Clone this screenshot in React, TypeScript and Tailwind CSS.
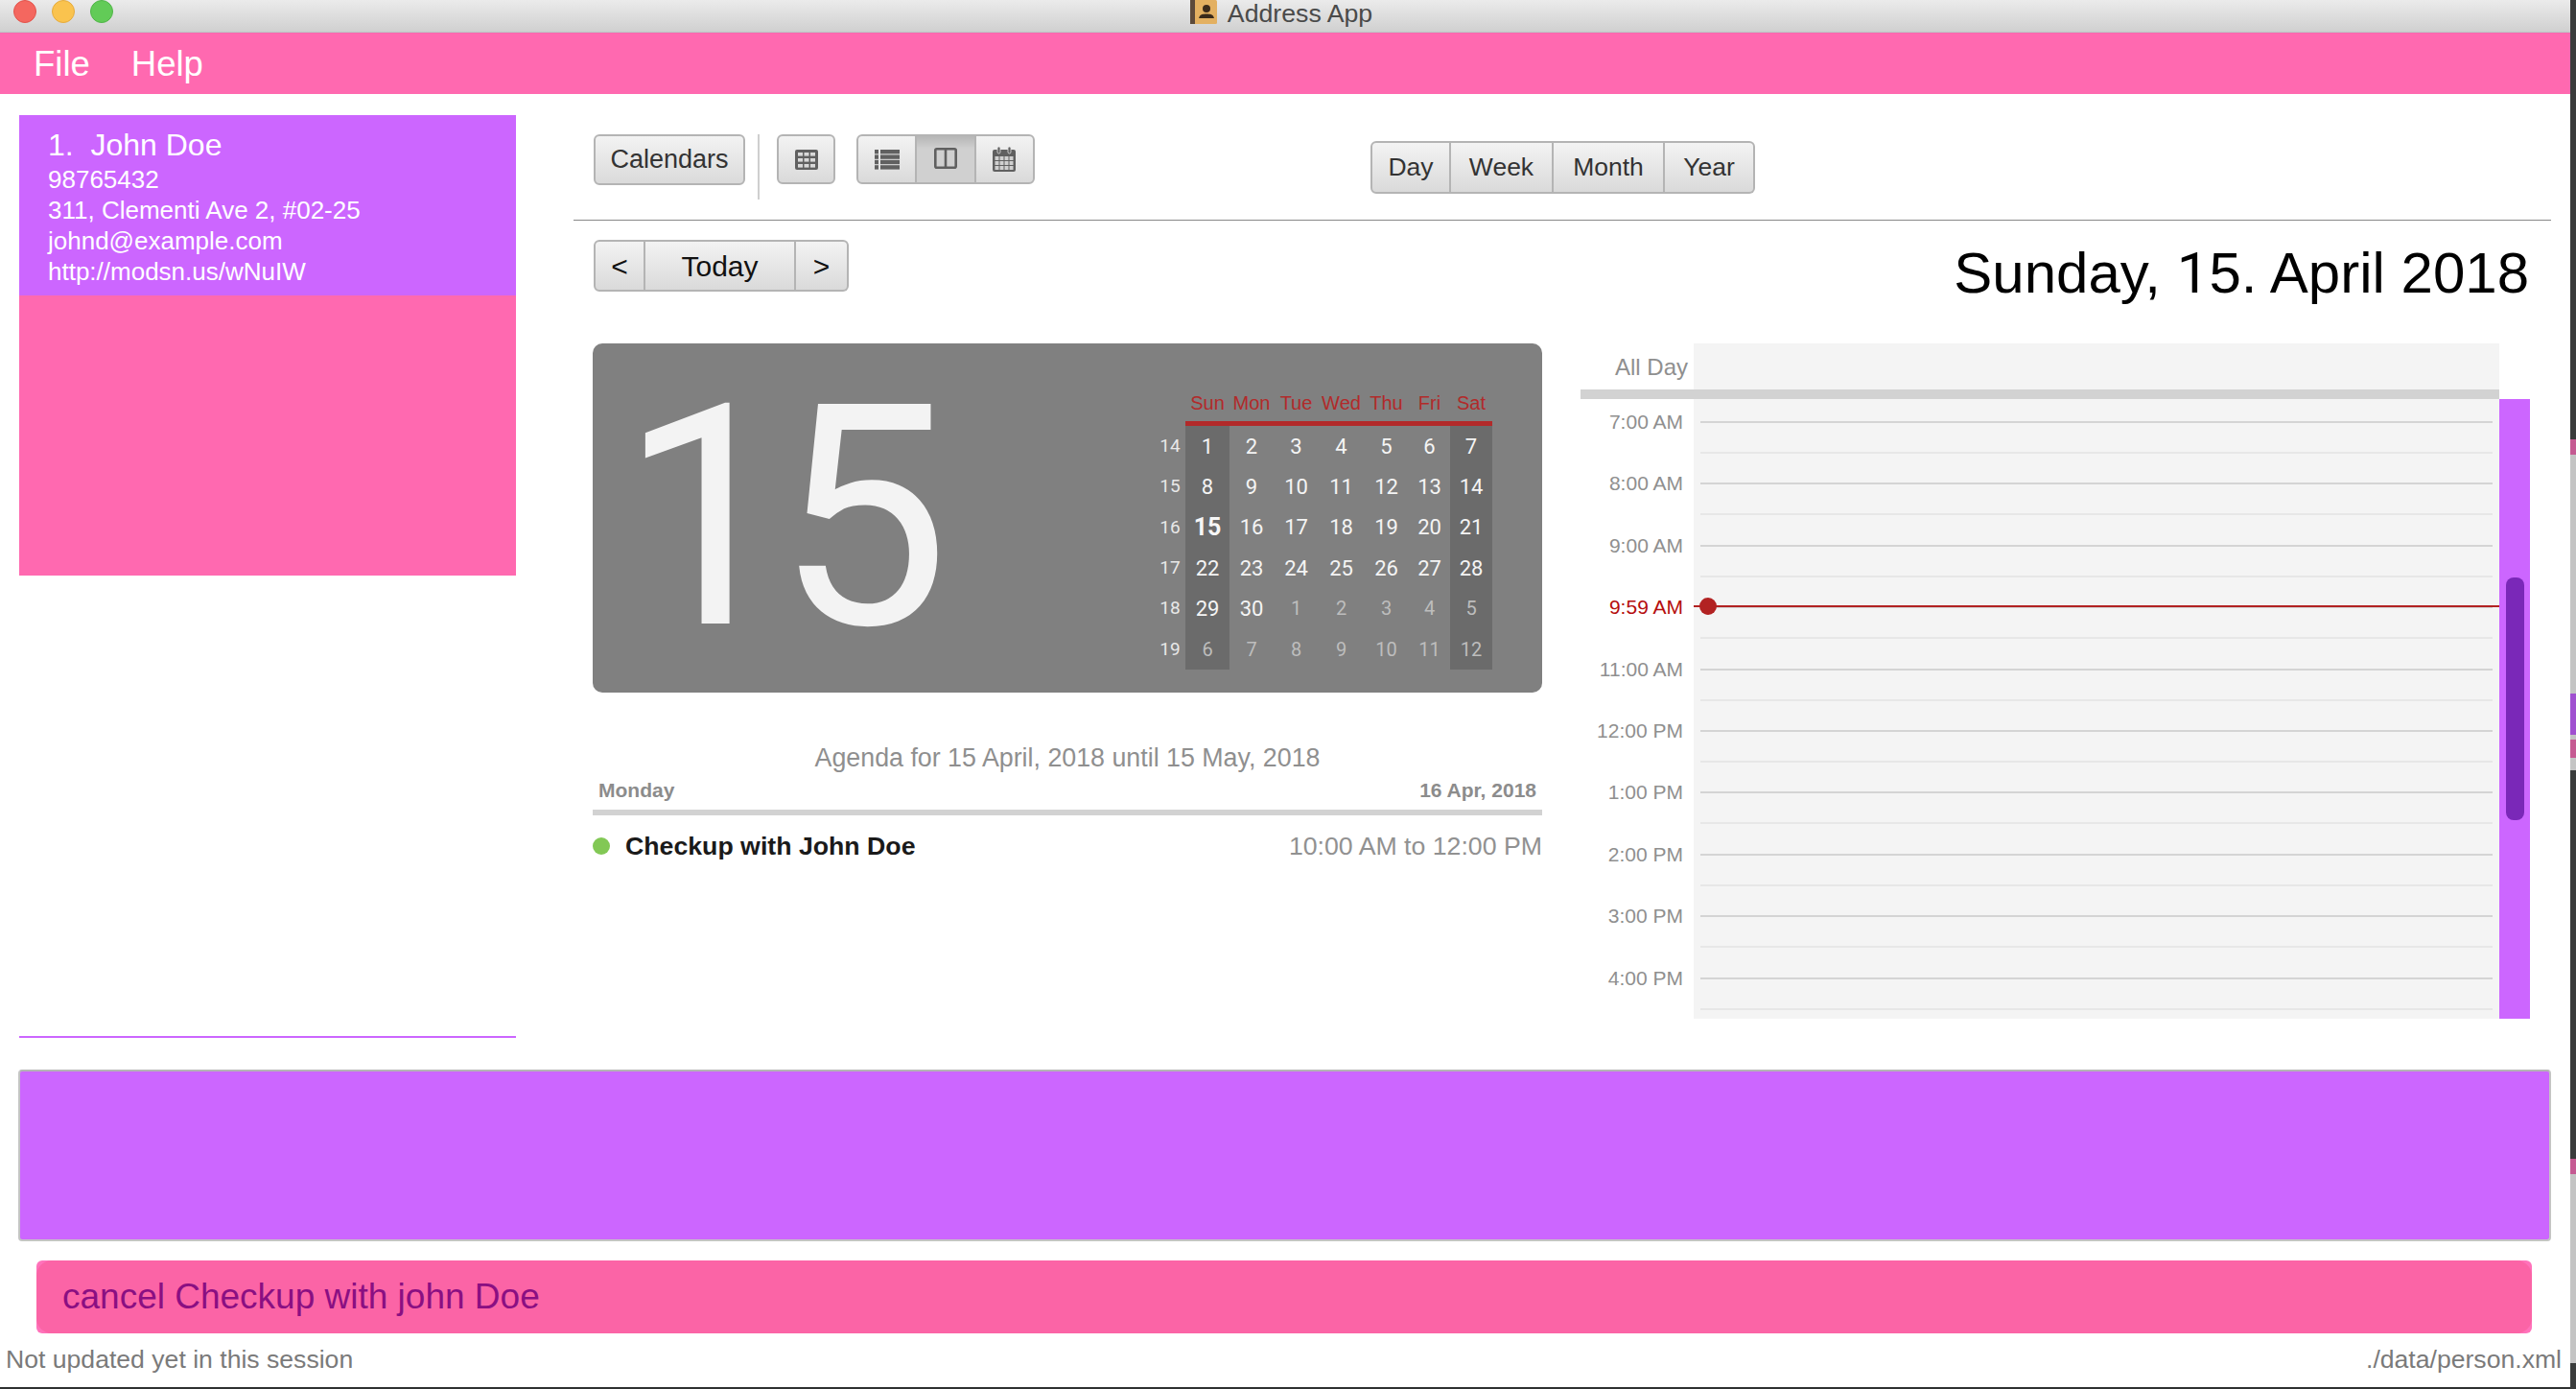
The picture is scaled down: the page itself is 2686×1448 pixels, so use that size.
import React from "react";

const weeks = [
  { no: 14, days: [1, 2, 3, 4, 5, 6, 7] },
  { no: 15, days: [8, 9, 10, 11, 12, 13, 14] },
  { no: 16, days: [15, 16, 17, 18, 19, 20, 21] },
  { no: 17, days: [22, 23, 24, 25, 26, 27, 28] },
  { no: 18, days: [29, 30, 1, 2, 3, 4, 5] },
  { no: 19, days: [6, 7, 8, 9, 10, 11, 12] },
];

const dayNames = ["Sun", "Mon", "Tue", "Wed", "Thu", "Fri", "Sat"];

const hours = [
  "7:00 AM",
  "8:00 AM",
  "9:00 AM",
  "9:59 AM",
  "11:00 AM",
  "12:00 PM",
  "1:00 PM",
  "2:00 PM",
  "3:00 PM",
  "4:00 PM",
];

const btn =
  "flex items-center justify-center bg-gradient-to-b from-[#f3f3f3] to-[#dadada] border-2 border-[#b4b4b4]";

function MiniCalendar() {
  return (
    <div className="grid grid-cols-[28px_46px_46px_47px_47px_47px_43px_44px] grid-rows-[34px_5px] auto-rows-[42.33px] font-['Roboto',sans-serif]">
      <div />
      {dayNames.map((d) => (
        <div key={d} className="flex items-center justify-center pb-[5px] text-[20px] text-[#b22a2a] font-['Liberation_Sans',sans-serif]">
          {d}
        </div>
      ))}
      <div />
      <div className="col-span-7 bg-[#b22a2a]" />
      {weeks.map((w, i) => (
        <React.Fragment key={w.no}>
          <div className="flex items-center justify-center text-[19px] text-[#e8e8e8] pr-[4px]">{w.no}</div>
          {w.days.map((d, j) => {
            const muted = (i === 4 && j > 1) || i === 5;
            const weekend = j === 0 || j === 6;
            const today = d === 15 && i === 2;
            return (
              <div
                key={j}
                className={`flex items-center justify-center ${weekend ? "bg-[#6b6b6b]" : ""} ${
                  today ? "text-[25px] font-bold text-[#f6f6f6]" : muted ? "text-[20px] text-[#bdbdbd]" : "text-[22px] text-[#f4f4f4]"
                }`}
              >
                {d}
              </div>
            );
          })}
        </React.Fragment>
      ))}
    </div>
  );
}

function TableIcon() {
  return (
    <svg width="24" height="21" viewBox="0 0 24 21">
      <rect width="24" height="21" rx="2" fill="#606060" />
      {[3, 9, 15].map((y) =>
        [3, 9.5, 16].map((x) => <rect key={`${x}-${y}`} x={x} y={y} width="5" height="3.6" fill="#d8d8d8" />)
      )}
    </svg>
  );
}

function ListIcon() {
  return (
    <svg width="26" height="21" viewBox="0 0 26 21" fill="#606060">
      {[0, 5.4, 10.8, 16.2].map((y) => (
        <g key={y}>
          <rect x="0" y={y} width="4" height="4.4" />
          <rect x="6" y={y} width="20" height="4.4" />
        </g>
      ))}
    </svg>
  );
}

function SplitIcon() {
  return (
    <svg width="24" height="22" viewBox="0 0 24 22" fill="none" stroke="#606060" strokeWidth="2.6">
      <rect x="1.3" y="1.3" width="21.4" height="19.4" rx="1.5" />
      <path d="M12 1v20" />
    </svg>
  );
}

function CalendarIcon() {
  return (
    <svg width="24" height="26" viewBox="0 0 24 26">
      <rect y="3" width="24" height="23" rx="2" fill="#606060" />
      <rect x="5" y="0" width="3" height="7" rx="1.5" fill="#606060" stroke="#e4e4e4" strokeWidth="0.8" />
      <rect x="16" y="0" width="3" height="7" rx="1.5" fill="#606060" stroke="#e4e4e4" strokeWidth="0.8" />
      {[10, 15, 20].map((y) =>
        [2.5, 7.5, 12.5, 17.5].map((x) => <rect key={`${x}-${y}`} x={x} y={y} width="4" height="4" fill="#d0d0d0" />)
      )}
    </svg>
  );
}

function BookIcon() {
  return (
    <svg width="28" height="25" viewBox="0 0 28 25">
      <rect width="28" height="25" rx="1.5" fill="#e3b061" />
      <rect width="5" height="25" fill="#5d4a3a" />
      <circle cx="17" cy="9" r="4" fill="#3a2a1a" />
      <path d="M9 19c1-4 4-4.500 8-4.500s7 .5 8 4.500z" fill="#3a2a1a" />
    </svg>
  );
}

export default function App() {
  return (
    <div className="flex w-[2686px] h-[1448px] overflow-hidden bg-[#2f3131] font-['Liberation_Sans',Arial,sans-serif]">
      <div className="flex flex-col w-[2680px] h-[1446px] bg-white shrink-0">
        {/* title bar */}
        <div className="relative flex items-start justify-center gap-[11px] h-[34px] pr-[8px] border-b border-[#b9c6c6] bg-gradient-to-b from-[#ebebeb] to-[#d0d0d0]">
          <div className="absolute left-[14px] top-0 flex gap-[16px]">
            <span className="w-[24px] h-[24px] rounded-full bg-[#f4675f] border border-[#e2534b]" />
            <span className="w-[24px] h-[24px] rounded-full bg-[#fac34e] border border-[#e6ab3c]" />
            <span className="w-[24px] h-[24px] rounded-full bg-[#62cb57] border border-[#50b548]" />
          </div>
          <div className="h-[25px]">
            <BookIcon />
          </div>
          <span className="mt-[1px] text-[26.7px] leading-[26px] text-[#4a4a4a]">Address App</span>
        </div>

        {/* menu */}
        <div className="flex items-center gap-[43px] h-[64px] pl-[35px] pt-[3px] bg-[#ff69b0] text-[36.5px] text-white">
          <span>File</span>
          <span>Help</span>
        </div>

        <div className="flex h-[1017px]">
          {/* person list */}
          <div className="flex flex-col w-[518px] ml-[20px] pt-[22px] pb-[33px]">
            <div className="h-[480px] bg-[#ff69b0]">
              <div className="flex flex-col h-[188px] pl-[30px] pt-[11px] bg-[#cc66ff] text-white text-[26px] leading-[32px]">
                <span className="text-[32px] leading-[40px] whitespace-pre">1.  John Doe</span>
                <span>98765432</span>
                <span>311, Clementi Ave 2, #02-25</span>
                <span>johnd@example.com</span>
                <span>http://modsn.us/wNuIW</span>
              </div>
            </div>
            <div className="mt-auto h-[2px] bg-[#cc66ff]" />
          </div>

          {/* calendar */}
          <div className="flex flex-col w-[2062px] ml-[60px]">
            <div className="flex items-start h-[132px] pt-[42px] pl-[21px] border-b border-[#888]">
              <div className={`${btn} w-[158px] h-[53px] rounded-[6px] text-[27px] text-[#333]`}>Calendars</div>
              <div className="w-[2px] h-[68px] ml-[13px] bg-[#cfcfcf]" />
              <div className={`${btn} w-[61px] h-[52px] ml-[18px] rounded-[6px]`}>
                <TableIcon />
              </div>
              <div className="flex w-[186px] h-[52px] ml-[22px]">
                <div className={`${btn} flex-1 rounded-l-[6px]`}>
                  <ListIcon />
                </div>
                <div className="flex flex-1 items-center justify-center bg-gradient-to-b from-[#b2b2b2] to-[#d0d0d0] to-30% border-b-2 border-[#b4b4b4]">
                  <SplitIcon />
                </div>
                <div className={`${btn} flex-1 rounded-r-[6px]`}>
                  <CalendarIcon />
                </div>
              </div>
              <div className="flex w-[401px] h-[55px] ml-[350px] mt-[7px] text-[26.5px] text-[#333]">
                <div className={`${btn} w-[84px] rounded-l-[6px]`}>Day</div>
                <div className={`${btn} w-[107px] border-l-0`}>Week</div>
                <div className={`${btn} w-[116px] border-l-0`}>Month</div>
                <div className={`${btn} w-[94px] border-l-0 rounded-r-[6px]`}>Year</div>
              </div>
            </div>

            <div className="flex items-start justify-between h-[128px] pt-[20px] pl-[21px] pr-[23px]">
              <div className="flex h-[54px] text-[30px] text-[#111]">
                <div className={`${btn} w-[54px] rounded-l-[6px]`}>&lt;</div>
                <div className={`${btn} w-[157px] border-l-0`}>Today</div>
                <div className={`${btn} w-[55px] border-l-0 rounded-r-[6px]`}>&gt;</div>
              </div>
              <div className="mt-[5px] text-[60px] leading-[60px] text-black">
                Sunday, <span className="font-['Roboto',sans-serif]">1</span>5. April 2018
              </div>
            </div>

            <div className="flex h-[704px]">
              {/* month panel + agenda */}
              <div className="flex flex-col w-[990px] ml-[20px]">
                <div className="flex justify-between h-[364px] pl-[28px] pr-[52px] pt-[47px] rounded-[10px] bg-[#808080]">
                  <span className="-mt-[47px] font-['Roboto',sans-serif] font-normal text-[322px] tracking-[-18px] leading-[364px] text-[#f3f3f3]">15</span>
                  <MiniCalendar />
                </div>
                <div className="mt-[53px] h-[30px] leading-[30px] text-center text-[26.8px] text-[#8f8f8f]">
                  Agenda for 15 April, 2018 until 15 May, 2018
                </div>
                <div className="flex justify-between mt-[7px] h-[24px] px-[6px] text-[21px] leading-[24px] font-bold text-[#8c8c8c]">
                  <span>Monday</span>
                  <span>16 Apr, 2018</span>
                </div>
                <div className="mt-[8px] h-[6px] bg-[#d2d2d2]" />
                <div className="flex items-center mt-[17px] h-[30px] text-[26.7px]">
                  <span className="w-[18px] h-[18px] rounded-full bg-[#82c855]" />
                  <span className="ml-[16px] font-bold text-[#1a1a1a]">Checkup with John Doe</span>
                  <span className="ml-auto text-[#919191]">10:00 AM to 12:00 PM</span>
                </div>
              </div>

              {/* day view */}
              <div className="flex flex-col w-[990px] ml-[40px]">
                <div className="flex h-[48px]">
                  <div className="w-[118px] pr-[6px] pt-[11px] text-right text-[24px] leading-[28px] text-[#8f8f8f]">All Day</div>
                  <div className="w-[840px] bg-[#f4f4f4]" />
                </div>
                <div className="w-[958px] h-[10px] bg-[#d2d2d2]" />
                <div className="flex h-[646px] overflow-hidden">
                  <div className="w-[118px] pt-[8px] pr-[11px] text-right text-[21px] leading-[32px] text-[#8f8f8f]">
                    {hours.map((h) => (
                      <div key={h} className={`h-[64.4px] ${h === "9:59 AM" ? "text-[#b50d0d]" : ""}`}>
                        {h}
                      </div>
                    ))}
                  </div>
                  <div className="relative w-[840px] pt-[23px] px-[7px] bg-[#f4f4f4]">
                    {hours.map((h) => (
                      <div key={h} className="h-[64.4px]">
                        <div className="h-[2px] bg-[#d4d4d4]" />
                        <div className="h-[2px] mt-[30px] bg-[#e7e7e7]" />
                      </div>
                    ))}
                    <div className="absolute left-0 right-0 top-[215px] h-[2px] bg-[#b22222]" />
                    <div className="absolute left-[6px] top-[207px] w-[18px] h-[18px] rounded-full bg-[#b22222]" />
                  </div>
                  <div className="w-[32px] pl-[7px] pt-[186px] bg-[#cc66ff]">
                    <div className="w-[19px] h-[253px] rounded-[8px] bg-[#7a28b8]" />
                  </div>
                </div>
              </div>
            </div>
          </div>
        </div>

        {/* command box */}
        <div className="h-[179px] w-[2641px] ml-[19px] rounded-[4px] border-2 border-[#c4c4c4] border-t-[#b5b5b5] bg-[#cc66ff]" />

        {/* result display */}
        <div className="w-[2602px] h-[76px] ml-[38px] mt-[20px] rounded-[6px] bg-[#ff72ba]">
          <div className="flex items-center h-full pl-[27px] rounded-[16px] bg-[#fb64a6] text-[37px] text-[#8a0f82]">
            cancel Checkup with john Doe
          </div>
        </div>

        {/* status bar */}
        <div className="flex items-center justify-between flex-1 pl-[6px] pr-[9px] text-[26.6px] text-[#7a7a7a]">
          <span>Not updated yet in this session</span>
          <span>./data/person.xml</span>
        </div>
      </div>

      {/* desktop behind the window */}
      <div className="flex flex-col w-[6px] h-[1448px] bg-[#3a3c3c]">
        <div className="h-[458px]" />
        <div className="h-[16px] bg-[#c55a92]" />
        <div className="h-[249px] bg-[#c4c4c4]" />
        <div className="h-[43px] bg-[#a050d0]" />
        <div className="h-[5px] bg-[#c4c4c4]" />
        <div className="h-[19px] bg-[#c55a92]" />
        <div className="h-[13px] bg-[#c4c4c4]" />
        <div className="h-[405px]" />
        <div className="h-[16px] bg-[#c55a92]" />
        <div className="h-[197px] bg-[#c4c4c4]" />
      </div>
    </div>
  );
}
